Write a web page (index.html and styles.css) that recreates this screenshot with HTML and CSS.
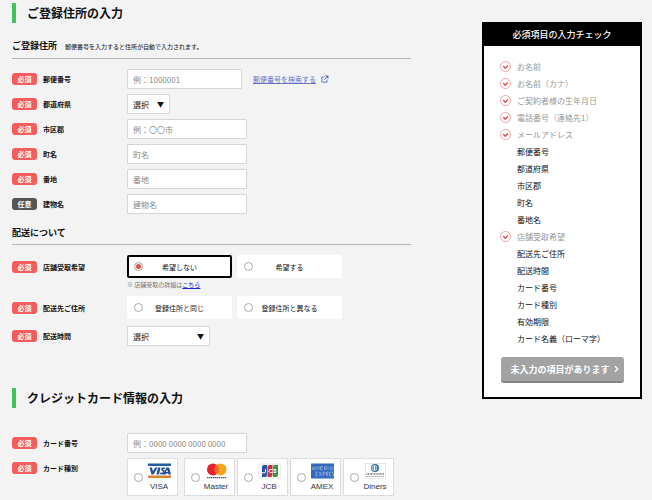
FILE: index.html
```html
<!DOCTYPE html>
<html lang="ja">
<head>
  <meta charset="UTF-8">
  <meta name="viewport" content="width=device-width, initial-scale=1">
  <title>ご登録住所の入力</title>
  <link rel="stylesheet" href="styles.css">
</head>
<body>

<svg class="defs" aria-hidden="true">
  <symbol id="check" viewBox="0 0 22 22">
    <circle cx="11" cy="11" r="10" fill="#fff" stroke="#ee8f93" stroke-width="1.6"/>
    <path d="M6.5 10l4 4.5 5.5-5.5" fill="none" stroke="#dc4a54" stroke-width="2.8"/>
  </symbol>
</svg>

<div class="page">
  <main>
    <form id="entryForm">
      <h2>ご登録住所の入力</h2>

      <h3>ご登録住所 <small>郵便番号を入力すると住所が自動で入力されます。</small></h3>
      <div class="rows">
        <div class="row">
          <label for="zip"><span class="badge">必須</span>郵便番号</label>
          <div class="field">
            <input class="text zip" type="text" id="zip" placeholder="例：1000001">
            <a class="search" href="#zip">郵便番号を検索する
              <svg viewBox="0 0 14 14" fill="none" stroke="#5a69c0" stroke-width="1.6"><path d="M6 3.5H1.5v9h9V8"/><path d="M5.5 8.5L12 2"/><path d="M7 1h6v6z" fill="#5a69c0" stroke="none"/></svg>
            </a>
          </div>
        </div>
        <div class="row">
          <label for="pref"><span class="badge">必須</span>都道府県</label>
          <div class="select pref"><select id="pref"><option>選択</option><option>東京都</option><option>大阪府</option></select></div>
        </div>
        <div class="row">
          <label for="city"><span class="badge">必須</span>市区郡</label>
          <input class="text" type="text" id="city" placeholder="例：〇〇市">
        </div>
        <div class="row">
          <label for="town"><span class="badge">必須</span>町名</label>
          <input class="text" type="text" id="town" placeholder="町名">
        </div>
        <div class="row">
          <label for="block"><span class="badge">必須</span>番地</label>
          <input class="text" type="text" id="block" placeholder="番地">
        </div>
        <div class="row">
          <label for="building"><span class="badge any">任意</span>建物名</label>
          <input class="text" type="text" id="building" placeholder="建物名">
        </div>
      </div>

      <h3 class="delivery">配送について</h3>
      <div class="rows wide">
        <div class="row tall">
          <span class="label" id="pickupLabel"><span class="badge">必須</span>店舗受取希望</span>
          <div>
            <div class="choices" role="radiogroup" aria-labelledby="pickupLabel">
              <label class="choice"><input type="radio" name="pickup" checked><span>希望しない</span></label>
              <label class="choice"><input type="radio" name="pickup"><span>希望する</span></label>
            </div>
            <p class="note">※ 店舗受取の詳細は<a href="#pickup">こちら</a></p>
          </div>
        </div>
        <div class="row tall">
          <span class="label" id="destLabel"><span class="badge">必須</span>配送先ご住所</span>
          <div class="choices" role="radiogroup" aria-labelledby="destLabel">
            <label class="choice"><input type="radio" name="dest"><span>登録住所と同じ</span></label>
            <label class="choice"><input type="radio" name="dest"><span>登録住所と異なる</span></label>
          </div>
        </div>
        <div class="row">
          <label for="time"><span class="badge">必須</span>配送時間</label>
          <div class="select time"><select id="time"><option>選択</option><option>午前中</option><option>14時～16時</option></select></div>
        </div>
      </div>

      <h2 class="credit">クレジットカード情報の入力</h2>
      <div class="rows card-rows">
        <div class="row">
          <label for="cardNo"><span class="badge">必須</span>カード番号</label>
          <input class="text" type="text" id="cardNo" placeholder="例：0000 0000 0000 0000">
        </div>
        <div class="row">
          <span class="label" id="brandLabel"><span class="badge">必須</span>カード種別</span>
          <div class="cards" role="radiogroup" aria-labelledby="brandLabel">
            <label class="card">
              <input type="radio" name="brand">
              <span class="brand">
                <svg viewBox="0 0 46 32"><path fill="#255aa5" d="M0 1h46v5H0z"/><path fill="#d9822f" d="M0 25h46v5H0z"/><path fill="#1f4f9c" d="M3 9h5l2 8 4-8h5l-8 14H7zM20 9h5l-3 14h-5zM37 9h5l4 14h-5l-.5-2H36l-1 2h-5zM38 13l-2 5h4z"/><path fill="none" stroke="#1f4f9c" stroke-width="3.4" d="M34 11c-3-1-6-.5-6 1.500 0 3 4 2 4 5s-4 4.500-8 3"/></svg>
                VISA
              </span>
            </label>
            <label class="card">
              <input type="radio" name="brand">
              <span class="brand">
                <svg viewBox="0 0 46 32"><circle cx="16" cy="13" r="12" fill="#e8202a"/><circle cx="31" cy="13" r="12" fill="#f5a31f"/><path fill="#f4661f" d="M23.500 3.700a12 12 0 0 1 0 18.600a12 12 0 0 1 0-18.600z"/><path stroke="#555" stroke-width="2.500" stroke-dasharray="3 1" d="M4 29h38"/></svg>
                Master
              </span>
            </label>
            <label class="card">
              <input type="radio" name="brand">
              <span class="brand">
                <svg viewBox="0 0 46 32"><rect x=".5" y="1.500" width="45" height="29" rx="2" fill="#f8f8f8" stroke="#ddd"/><path fill="#24549d" d="M12 4h6v20q0 4-4 4H8V8q0-4 4-4z"/><path fill="#c9303b" d="M23 4h6v20q0 4-4 4h-6V8q0-4 4-4z"/><path fill="#3b9349" d="M34 4h6v20q0 4-4 4h-6V8q0-4 4-4z"/><path fill="none" stroke="#fff" stroke-width="2" d="M15 12v6q0 2-3 2l-4-1M29 13h-4q-3 0-3 3t3 3h4M31 13h5M31 16h6M31 19h5"/></svg>
                JCB
              </span>
            </label>
            <label class="card">
              <input type="radio" name="brand">
              <span class="brand">
                <svg viewBox="0 0 46 32"><path fill="#3469bd" d="M0 1h46v30H0z"/><g fill="none" stroke="#a5c1e8" stroke-width="1.200"><path d="M2 14l3-7 3 7M3 12h4M10 14V7l3 4 3-4v7M24 7h-5v7h5M19 10h4M27 14V7h4v4h-4l4 3M34 7v7M42 8h-4v5h4M44 14V7"/><path d="M14 18h-4v8h4M10 22h3M16 18l5 8M21 18l-5 8M24 26v-8h4v4h-4M31 26v-8h3v4h-3l3 4M41 18h-4v8h4M37 22h3M45 18h-2v4h2v4h-2"/></g></svg>
                AMEX
              </span>
            </label>
            <label class="card">
              <input type="radio" name="brand">
              <span class="brand">
                <svg viewBox="0 0 46 32"><rect x="2.500" y=".5" width="41" height="30" fill="#fff" stroke="#ccc"/><circle cx="22" cy="10" r="8" fill="#286ca8"/><circle cx="21" cy="10" r="5.500" fill="#fff"/><path fill="#286ca8" d="M19.500 5.500v9a5 5 0 0 1 0-9zM22.500 5.500v9a5 5 0 0 0 0-9z"/><path stroke="#777" stroke-width="3" stroke-dasharray="2 1" d="M5 22h36"/><path stroke="#aaa" stroke-width="2" stroke-dasharray="3 1" d="M5 27h36"/></svg>
                Diners
              </span>
            </label>
          </div>
        </div>
      </div>
    </form>
  </main>

  <aside>
    <h2>必須項目の入力チェック</h2>
    <ul>
      <li class="done"><svg><use href="#check"/></svg>お名前</li>
      <li class="done"><svg><use href="#check"/></svg>お名前（カナ）</li>
      <li class="done"><svg><use href="#check"/></svg>ご契約者様の生年月日</li>
      <li class="done"><svg><use href="#check"/></svg>電話番号（連絡先1）</li>
      <li class="done"><svg><use href="#check"/></svg>メールアドレス</li>
      <li>郵便番号</li>
      <li>都道府県</li>
      <li>市区郡</li>
      <li>町名</li>
      <li>番地名</li>
      <li class="done"><svg><use href="#check"/></svg>店舗受取希望</li>
      <li>配送先ご住所</li>
      <li>配送時間</li>
      <li>カード番号</li>
      <li>カード種別</li>
      <li>有効期限</li>
      <li>カード名義（ローマ字）</li>
    </ul>
    <button type="submit" form="entryForm">未入力の項目があります
      <svg viewBox="0 0 10 14" fill="none" stroke="#fff" stroke-width="2.4"><path d="M2 1.500L7.500 7 2 12.500"/></svg>
    </button>
  </aside>
</div>

</body>
</html>
```
FILE: styles.css
```css
* { box-sizing:border-box; }
body { margin:0; background:#f3f3f3; color:#111; font-family:"Noto Sans CJK JP", sans-serif; font-size:7px; line-height:10px; }
h2, h3, p, ul { margin:0; padding:0; }
input, select, button { margin:0; font-family:inherit; }
.defs { display:none; }

.page { display:flex; align-items:flex-start; gap:71px; padding:3px 10px 0 12px; }
main { flex:1; min-width:0; }

main h2 { border-left:4px solid #3fc35c; padding-left:11px; font-size:12px; line-height:20px; }
main h2.credit { margin-top:42px; }
h3 { margin-top:16px; padding-bottom:4px; border-bottom:1px solid #b5b5b5; font-size:9px; line-height:14px; }
h3.delivery { margin-top:12px; }
h3 small { margin-left:6px; font-size:6px; font-weight:500; color:#333; }

.rows { display:grid; gap:5px; margin-top:10px; }
.rows.wide { gap:7px; }
.rows.card-rows { margin-top:25px; }
.row { display:grid; grid-template-columns:115px 1fr; align-items:start; }
.row > label, .label { display:flex; align-items:center; gap:6px; height:20px; font-weight:bold; }
.tall > .label { height:23px; }
.badge { width:25px; border-radius:3px; background:#f35d5d; color:#fff; line-height:12px; text-align:center; }
.badge.any { background:#555; }

.field { display:flex; align-items:center; gap:11px; }
.text, .select select { height:20px; border:1px solid #d6d6d6; border-radius:1px; background:#fff; padding:0 5px; font-size:8px; }
.text { width:120px; }
.text.zip { width:115px; }
.text::placeholder { color:#8a8a8a; opacity:1; }
.search { display:flex; align-items:center; gap:5px; color:#6673c4; }
.search svg { width:8px; height:8px; }

.select { position:relative; }
.select::after { content:"▼"; position:absolute; right:6px; top:5px; font-size:7px; pointer-events:none; }
.select select { display:block; width:100%; appearance:none; color:#111; }
.pref { width:43px; }
.time { width:83px; }

input[type=radio] { appearance:none; flex:none; width:9px; height:9px; border:1px solid #aaa; border-radius:50%; background:#fff; }
input[type=radio]:checked { background:#d9534f; border-color:#bbb; box-shadow:inset 0 0 0 1px #fff; }

.choices { display:flex; gap:5px; }
.choice { display:flex; align-items:center; width:105px; height:23px; padding:0 7px; border-radius:2px; background:#fff; }
.choice span { flex:1; padding-right:9px; text-align:center; }
.choice:has(:checked) { border:2px solid #000; padding:0 5px; }
.note { margin-top:3px; font-size:6px; line-height:8px; color:#777; }
.note a { color:#2222dd; }

.cards { display:flex; gap:2px; }
.card { display:flex; align-items:center; gap:4px; width:51px; height:38px; padding-left:6px; border:1px solid #ddd; background:#fff; }
.card:first-child { margin-right:4px; }
.brand { display:flex; flex-direction:column; align-items:center; gap:3px; width:24px; font-family:"Liberation Sans", Arial, sans-serif; font-size:8px; color:#333; }
.brand svg { width:23px; height:16px; }

aside { flex:0 0 160px; margin-top:19px; border:2px solid #000; background:#fff; }
aside h2 { background:#000; color:#fff; font-size:9px; font-weight:500; line-height:22px; text-align:center; }
aside ul { padding:12px 0 0 33px; list-style:none; font-size:8px; line-height:17px; }
aside li.done { display:flex; align-items:center; gap:6px; margin-left:-17px; color:#999; }
aside li svg { width:11px; height:11px; }
aside button { display:flex; align-items:center; justify-content:flex-end; gap:4px; width:123px; height:26px; margin:10px auto 14px; padding:0 5px; border:0; border-bottom:2px solid #858585; border-radius:3px; background:#a3a3a3; color:#fff; font-size:9px; font-weight:bold; }
aside button svg { width:5px; height:8px; }
```
